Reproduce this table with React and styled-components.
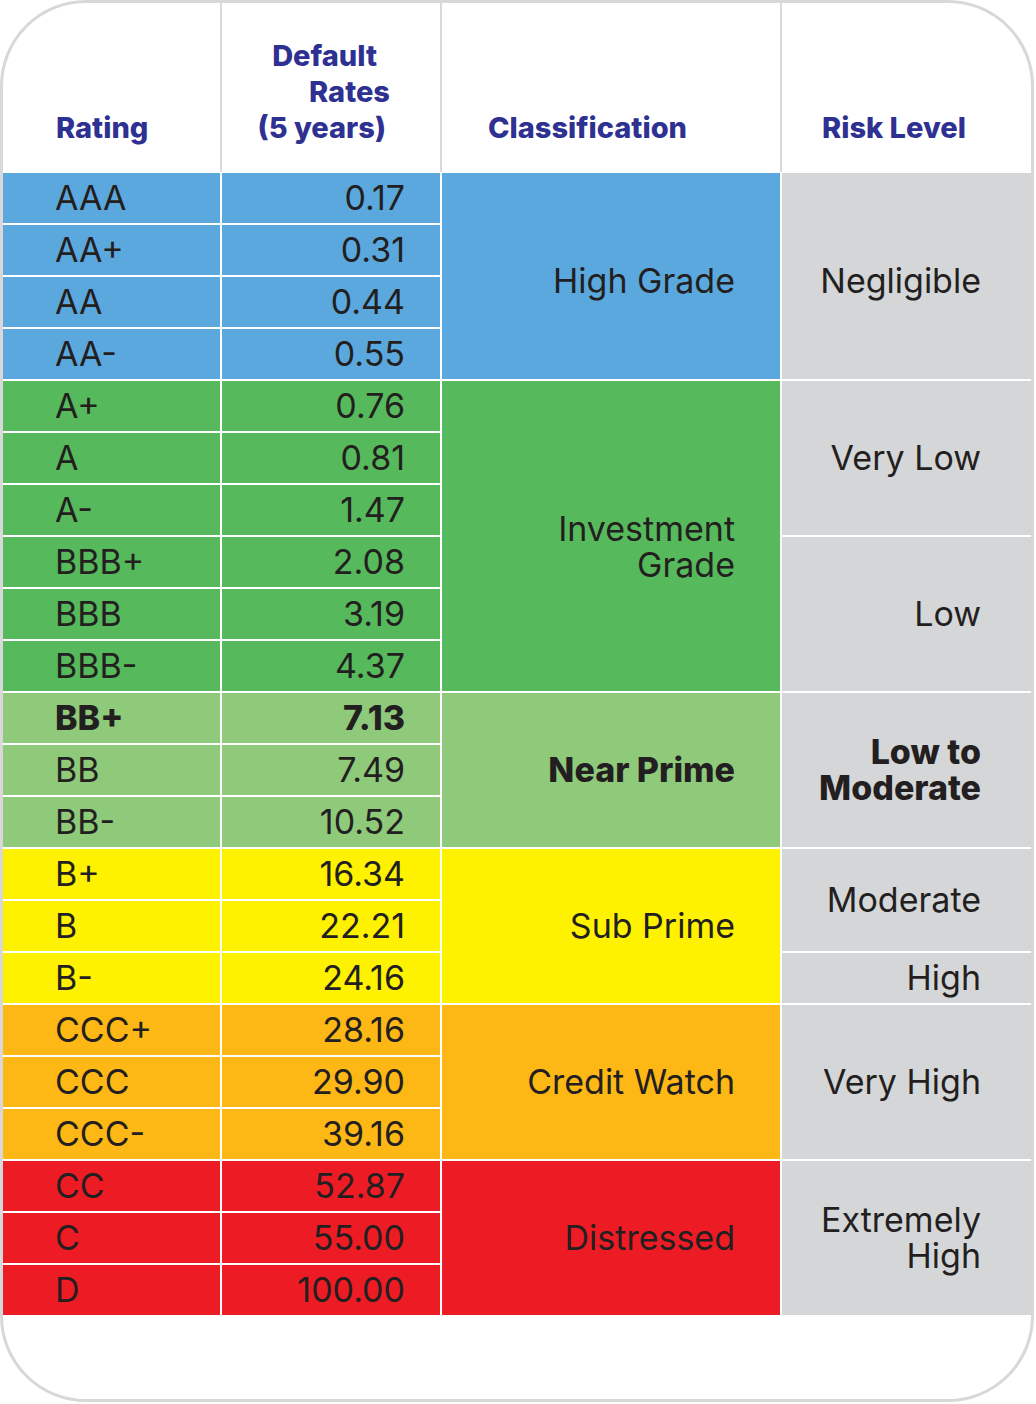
import React from "react";
import styled, { createGlobalStyle } from "styled-components";

const Global = createGlobalStyle`
  html, body { margin: 0; padding: 0; background: #ffffff; }
  body { font-family: Inter, "Noto Sans", "Liberation Sans", sans-serif; }
`;

const COLORS = {
  blue: "#5ba8df",
  green: "#56b95b",
  lime: "#8fca7b",
  yellow: "#fff200",
  orange: "#fdb815",
  red: "#ed1c24",
  gray: "#d5d6d8",
};

const Card = styled.div`
  box-sizing: border-box;
  width: 1034px;
  height: 1402px;
  border: 3px solid #d8d8d8;
  border-radius: 86px;
  overflow: hidden;
  background: #ffffff;
`;

const Table = styled.table`
  width: 1028px;
  table-layout: fixed;
  border-collapse: separate;
  border-spacing: 0;
  color: #231f20;
  font-family: Inter, "Noto Sans", "Liberation Sans", sans-serif;
`;

const Col = styled.col`
  width: ${(p) => p.$w}px;
`;

const HeadRow = styled.tr`
  height: 170px;
`;

const HeadCell = styled.th`
  box-sizing: border-box;
  padding: 0 0 25px ${(p) => p.$left || 0}px;
  padding-right: ${(p) => p.$right || 0}px;
  vertical-align: bottom;
  text-align: ${(p) => p.$align || "left"};
  font-size: 29px;
  font-weight: 800;
  line-height: 36px;
  color: #2e3192;
  border-right: ${(p) => (p.$last ? "none" : "2px solid #d9d9d9")};
  border-bottom: 2px solid #ffffff;
`;

const HeadLine = styled.span`
  display: block;
  margin-right: ${(p) => p.$shift || 0}px;
`;

const BodyRow = styled.tr`
  height: 52px;
`;

const Cell = styled.td`
  box-sizing: border-box;
  padding: 0;
  vertical-align: middle;
  font-size: 34px;
  line-height: 36px;
  white-space: nowrap;
  background: ${(p) => COLORS[p.$color]};
  border-bottom: 2px solid #ffffff;
  border-right: 2px solid #ffffff;
`;

const RatingCell = styled(Cell)`
  padding-left: 52px;
  text-align: left;
  font-weight: ${(p) => (p.$bold ? 800 : 400)};
`;

const RateCell = styled(Cell)`
  padding-right: 35px;
  text-align: right;
  font-weight: ${(p) => (p.$bold ? 800 : 400)};
`;

const ClassCell = styled(Cell)`
  padding-right: 45px;
  padding-top: ${(p) => p.$nudge || 0}px;
  text-align: right;
  font-weight: ${(p) => (p.$bold ? 800 : 400)};
`;

const RiskCell = styled(Cell)`
  padding-right: 50px;
  padding-top: ${(p) => p.$nudge || 0}px;
  text-align: right;
  border-right: none;
  background: ${COLORS.gray};
  font-weight: ${(p) => (p.$bold ? 800 : 400)};
`;

const rows = [
  ["AAA", "0.17", "blue"],
  ["AA+", "0.31", "blue"],
  ["AA", "0.44", "blue"],
  ["AA-", "0.55", "blue"],
  ["A+", "0.76", "green"],
  ["A", "0.81", "green"],
  ["A-", "1.47", "green"],
  ["BBB+", "2.08", "green"],
  ["BBB", "3.19", "green"],
  ["BBB-", "4.37", "green"],
  ["BB+", "7.13", "lime", true],
  ["BB", "7.49", "lime"],
  ["BB-", "10.52", "lime"],
  ["B+", "16.34", "yellow"],
  ["B", "22.21", "yellow"],
  ["B-", "24.16", "yellow"],
  ["CCC+", "28.16", "orange"],
  ["CCC", "29.90", "orange"],
  ["CCC-", "39.16", "orange"],
  ["CC", "52.87", "red"],
  ["C", "55.00", "red"],
  ["D", "100.00", "red"],
];

const classes = [
  { start: 0, span: 4, lines: ["High Grade"], color: "blue", nudge: 10 },
  { start: 4, span: 6, lines: ["Investment", "Grade"], color: "green", nudge: 22 },
  { start: 10, span: 3, lines: ["Near Prime"], color: "lime", bold: true },
  { start: 13, span: 3, lines: ["Sub Prime"], color: "yellow" },
  { start: 16, span: 3, lines: ["Credit Watch"], color: "orange" },
  { start: 19, span: 3, lines: ["Distressed"], color: "red" },
];

const risks = [
  { start: 0, span: 4, lines: ["Negligible"], nudge: 10 },
  { start: 4, span: 3, lines: ["Very Low"] },
  { start: 7, span: 3, lines: ["Low"] },
  { start: 10, span: 3, lines: ["Low to", "Moderate"], bold: true },
  { start: 13, span: 2, lines: ["Moderate"] },
  { start: 15, span: 1, lines: ["High"] },
  { start: 16, span: 3, lines: ["Very High"] },
  { start: 19, span: 3, lines: ["Extremely", "High"] },
];

const Lines = ({ lines }) =>
  lines.map((l, i) => (
    <React.Fragment key={i}>
      {i > 0 && <br />}
      {l}
    </React.Fragment>
  ));

export default function App() {
  return (
    <>
      <Global />
      <Card>
        <Table>
          <colgroup>
            <Col $w={219} />
            <Col $w={220} />
            <Col $w={340} />
            <Col $w={249} />
          </colgroup>
          <thead>
            <HeadRow>
              <HeadCell $left={53}>Rating</HeadCell>
              <HeadCell $align="right" $right={50}>
                <HeadLine $shift={13}>Default</HeadLine>
                <HeadLine>Rates</HeadLine>
                <HeadLine $shift={4}>(5 years)</HeadLine>
              </HeadCell>
              <HeadCell $left={46}>Classification</HeadCell>
              <HeadCell $left={40} $last>
                Risk Level
              </HeadCell>
            </HeadRow>
          </thead>
          <tbody>
            {rows.map(([rating, rate, color, bold], i) => {
              const cls = classes.find((c) => c.start === i);
              const risk = risks.find((r) => r.start === i);
              return (
                <BodyRow key={rating}>
                  <RatingCell $color={color} $bold={bold}>
                    {rating}
                  </RatingCell>
                  <RateCell $color={color} $bold={bold}>
                    {rate}
                  </RateCell>
                  {cls && (
                    <ClassCell
                      rowSpan={cls.span}
                      $color={cls.color}
                      $bold={cls.bold}
                      $nudge={cls.nudge}
                    >
                      <Lines lines={cls.lines} />
                    </ClassCell>
                  )}
                  {risk && (
                    <RiskCell
                      rowSpan={risk.span}
                      $bold={risk.bold}
                      $nudge={risk.nudge}
                    >
                      <Lines lines={risk.lines} />
                    </RiskCell>
                  )}
                </BodyRow>
              );
            })}
          </tbody>
        </Table>
      </Card>
    </>
  );
}
